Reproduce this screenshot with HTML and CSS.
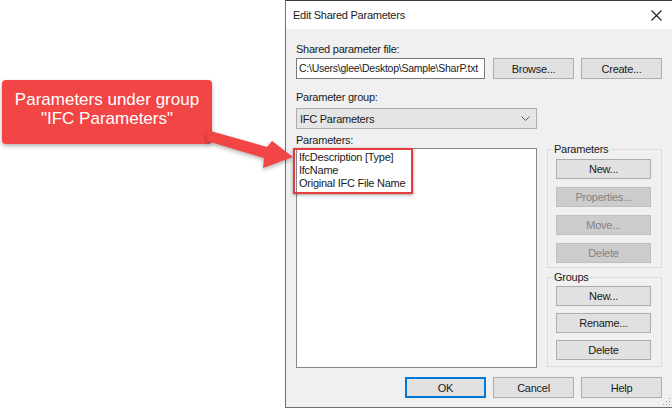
FILE: index.html
```html
<!DOCTYPE html>
<html lang="en">
<head>
    <meta charset="UTF-8"/>
    <title>Edit Shared Parameters</title>
    <link rel="stylesheet" href="styles.css">
</head>
<body>
<div class="page">
    <aside class="note-col">
        <div class="callout">Parameters under group<br>"IFC Parameters"</div>
    </aside>

    <section class="dialog">
        <header class="titlebar">
            <span>Edit Shared Parameters</span>
            <svg class="close" width="11" height="11" viewBox="0 0 11 11">
                <path d="M0.5 0.5 L10.5 10.5 M10.5 0.5 L0.5 10.5" stroke="#222" stroke-width="1.1" fill="none"/>
            </svg>
        </header>

        <div class="client">
            <div class="field-label">Shared parameter file:</div>
            <div class="file-row">
                <div class="textbox">C:\Users\glee\Desktop\Sample\SharP.txt</div>
                <button class="btn">Browse...</button>
                <button class="btn">Create...</button>
            </div>

            <div class="field-label group-label">Parameter group:</div>
            <div class="combo">
                <span>IFC Parameters</span>
                <svg width="9" height="5" viewBox="0 0 9 5">
                    <path d="M0.5 0.5 L4.5 4.5 L8.5 0.5" stroke="#606060" stroke-width="1" fill="none"/>
                </svg>
            </div>

            <div class="main">
                <div class="list-col">
                    <div class="field-label">Parameters:</div>
                    <div class="listbox">
                        <div>IfcDescription [Type]</div>
                        <div>IfcName</div>
                        <div>Original IFC File Name</div>
                    </div>
                </div>

                <div class="side">
                    <fieldset class="box">
                        <legend>Parameters</legend>
                        <div class="btn-stack">
                            <button class="btn">New...</button>
                            <button class="btn disabled">Properties...</button>
                            <button class="btn disabled">Move...</button>
                            <button class="btn disabled">Delete</button>
                        </div>
                    </fieldset>
                    <fieldset class="box groups">
                        <legend>Groups</legend>
                        <div class="btn-stack">
                            <button class="btn">New...</button>
                            <button class="btn">Rename...</button>
                            <button class="btn">Delete</button>
                        </div>
                    </fieldset>
                </div>
            </div>

            <div class="footer">
                <button class="btn default">OK</button>
                <button class="btn">Cancel</button>
                <button class="btn">Help</button>
            </div>
        </div>

        <svg class="grip" width="9" height="9" viewBox="0 0 9 9">
            <rect x="7" y="1" width="1" height="1" fill="#a0a0a0"/>
            <rect x="4" y="4" width="1" height="1" fill="#a0a0a0"/>
            <rect x="7" y="4" width="1" height="1" fill="#a0a0a0"/>
            <rect x="1" y="7" width="1" height="1" fill="#a0a0a0"/>
            <rect x="4" y="7" width="1" height="1" fill="#a0a0a0"/>
            <rect x="7" y="7" width="1" height="1" fill="#a0a0a0"/>
        </svg>
    </section>
</div>

<!-- red frame round the listed parameters -->
<div class="highlight"></div>

<!-- arrow from the note to the list -->
<svg class="arrow" width="300" height="200" viewBox="0 0 300 200">
    <polygon points="207,130 267,147 272,141 293,157 263,168 264,158 207,141" fill="#f24545"/>
</svg>
</body>
</html>
```

FILE: styles.css
```css
* {
    box-sizing: border-box;
}

html, body {
    margin: 0;
    padding: 0;
}

body {
    width: 672px;
    height: 409px;
    overflow: hidden;
    position: relative;
    background: #fff;
    font-family: "Liberation Sans", Arial, sans-serif;
}

.page {
    display: flex;
    height: 409px;
}

/* annotation column */
.note-col {
    flex: none;
    width: 285px;
    padding: 80px 0 0 2px;
}

.callout {
    width: 210px;
    height: 64px;
    padding-top: 10px;
    background: #f24545;
    border-radius: 4px;
    color: #fff;
    font-size: 17px;
    line-height: 19px;
    text-align: center;
    box-shadow: 0 2px 4px rgba(0, 0, 0, 0.3);
}

.arrow {
    position: absolute;
    left: 0;
    top: 0;
    filter: drop-shadow(0 2px 2px rgba(0, 0, 0, 0.3));
}

.highlight {
    position: absolute;
    left: 293px;
    top: 148px;
    width: 120px;
    height: 46px;
    border: 2px solid #e53d3d;
    box-shadow: 0 1px 3px rgba(0, 0, 0, 0.4);
}

/* dialog window */
.dialog {
    flex: none;
    position: relative;
    width: 387px;
    height: 408px;
    display: flex;
    flex-direction: column;
    background: #f0f0f0;
    border: 1px solid #6f6f6f;
    border-top-color: #3c3c3c;
    border-right: none;
    font-size: 11px;
    letter-spacing: -0.25px;
    color: #1a1a1a;
}

.titlebar {
    flex: none;
    height: 28px;
    display: flex;
    align-items: center;
    justify-content: space-between;
    padding: 0 10px 0 7px;
    background: #fff;
}

.client {
    flex: 1;
    display: flex;
    flex-direction: column;
    padding: 13px 10px 0 10px;
}

.field-label {
    height: 15px;
    line-height: 15px;
}

.group-label {
    margin-top: 11px;
}

.file-row {
    display: flex;
    margin-top: 1px;
}

.textbox {
    width: 189px;
    height: 21px;
    padding-left: 2px;
    line-height: 19px;
    font-size: 10.5px;
    background: #fff;
    border: 1px solid #7a7a7a;
    white-space: nowrap;
    overflow: hidden;
}

.file-row .btn {
    width: 81px;
    height: 21px;
    margin-left: 8px;
}

.file-row .btn + .btn {
    margin-left: 7px;
}

.combo {
    width: 241px;
    height: 21px;
    margin-top: 3px;
    display: flex;
    align-items: center;
    justify-content: space-between;
    padding: 0 6px 0 3px;
    background: #e5e5e5;
    border: 1px solid #adadad;
}

.main {
    display: grid;
    grid-template-columns: 241px 115px;
    column-gap: 10px;
    margin-top: 4px;
}

.listbox {
    height: 220px;
    padding: 2px 0 0 2px;
    line-height: 13px;
    background: #fff;
    border: 1px solid #828790;
}

.side {
    padding-top: 10px;
}

.box {
    margin: 0;
    padding: 3px 0 4px 8px;
    border: 1px solid #dcdcdc;
}

.box legend {
    margin-left: -3px;
    padding: 0 1px;
    line-height: 13px;
}

.box.groups {
    margin-top: 3px;
    padding: 2px 0 6px 8px;
}

.btn-stack {
    display: flex;
    flex-direction: column;
    gap: 8px;
}

.groups .btn-stack {
    gap: 7px;
}

.btn {
    width: 95px;
    height: 20px;
    padding: 0;
    font: inherit;
    letter-spacing: inherit;
    color: #1a1a1a;
    background: #e1e1e1;
    border: 1px solid #adadad;
}

.btn.disabled {
    color: #838383;
    background: #cccccc;
    border-color: #bfbfbf;
}

.footer {
    display: flex;
    justify-content: flex-end;
    gap: 7px;
    margin-top: 9px;
}

.footer .btn {
    width: 81px;
    height: 21px;
}

.btn.default {
    border: 2px solid #0078d7;
}

.grip {
    position: absolute;
    right: 1px;
    bottom: 1px;
}
```
